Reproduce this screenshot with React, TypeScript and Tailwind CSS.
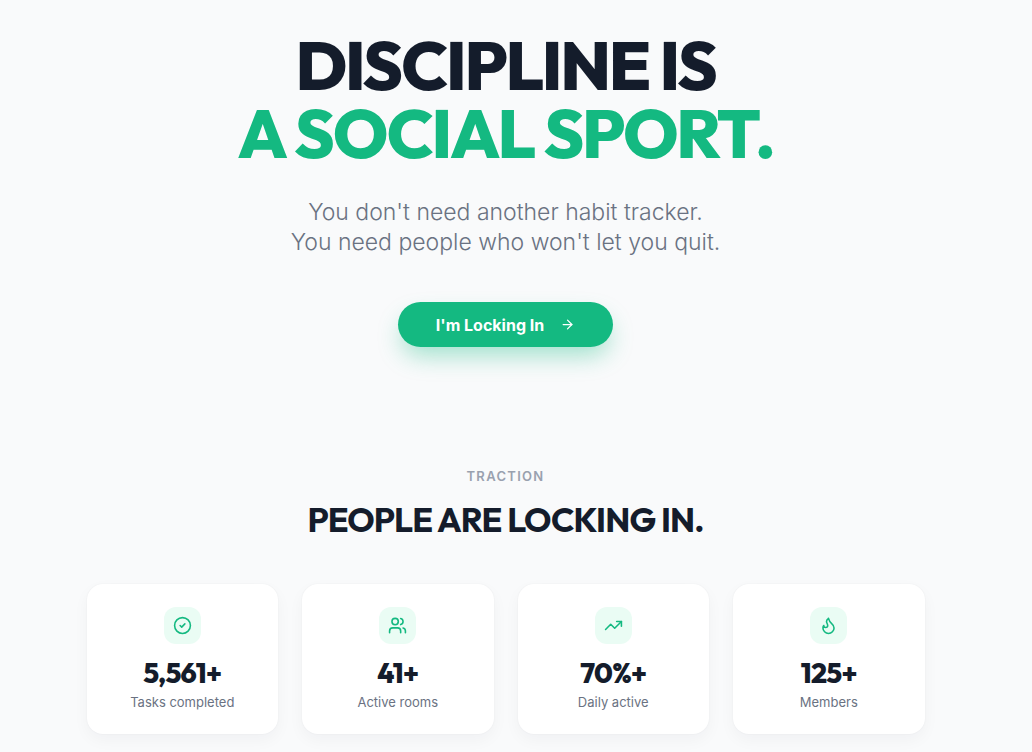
import type { LucideIcon } from "lucide-react";
import { ArrowRight, CircleCheck, Flame, TrendingUp, Users } from "lucide-react";

type Stat = { icon: LucideIcon; value: string; label: string };

const stats: Stat[] = [
  { icon: CircleCheck, value: "5,561+", label: "Tasks completed" },
  { icon: Users, value: "41+", label: "Active rooms" },
  { icon: TrendingUp, value: "70%+", label: "Daily active" },
  { icon: Flame, value: "125+", label: "Members" },
];

function Hero() {
  return (
    <section className="flex flex-col items-center text-center">
      <h1 className="font-[Outfit,Lato,sans-serif] text-[68px] leading-[68px] font-extrabold tracking-[-0.033em] text-[#141c2b]">
        <span className="block">DISCIPLINE IS</span>
        <span className="block text-[#14b981]">A SOCIAL SPORT.</span>
      </h1>
      <p className="mt-[30px] text-[23px] leading-[30px] font-light text-gray-500">
        You don't need another habit tracker.
        <br />
        You need people who won't let you quit.
      </p>
      <button
        type="button"
        className="mt-[45px] flex h-[45px] items-center gap-4 rounded-full bg-[#14b981] px-[38px] text-base font-bold text-white shadow-[0_12px_24px_-4px_rgba(20,185,129,0.4)]"
      >
        I'm Locking In
        <ArrowRight size={15} strokeWidth={2} aria-hidden="true" />
      </button>
    </section>
  );
}

function StatCard({ icon: Icon, value, label }: Stat) {
  return (
    <li className="flex flex-col items-center rounded-2xl bg-white px-4 pt-[23px] pb-[22px] text-center shadow-[0_0_2px_rgba(15,23,42,0.05),0_6px_16px_rgba(15,23,42,0.04)]">
      <span className="flex size-[37px] items-center justify-center rounded-xl bg-[#eafcf4] text-[#14b981]">
        <Icon size={19} strokeWidth={2} aria-hidden="true" />
      </span>
      <strong className="mt-[15px] font-[Outfit,Lato,sans-serif] text-[28px] leading-[28px] font-extrabold tracking-tight text-[#141c2b]">
        {value}
      </strong>
      <span className="mt-[5px] text-[13px] leading-[20px] text-gray-500">{label}</span>
    </li>
  );
}

function Traction() {
  return (
    <section className="mt-[120px] flex flex-col items-center text-center">
      <p className="text-[13px] leading-[18px] font-semibold tracking-widest text-gray-400">TRACTION</p>
      <h2 className="mt-4 font-[Outfit,Lato,sans-serif] text-[34px] leading-[38px] font-bold tracking-tight text-[#141c2b]">
        PEOPLE ARE LOCKING IN.
      </h2>
      <ul className="mt-[45px] grid w-full grid-cols-2 gap-6 md:grid-cols-4">
        {stats.map((stat) => (
          <StatCard key={stat.label} {...stat} />
        ))}
      </ul>
    </section>
  );
}

export default function App() {
  return (
    <div className="min-h-screen bg-[#f9fafb] pr-[21px] font-[Inter,sans-serif]">
      <main className="mx-auto max-w-[838px] pt-[31px] pb-4">
        <Hero />
        <Traction />
      </main>
    </div>
  );
}
